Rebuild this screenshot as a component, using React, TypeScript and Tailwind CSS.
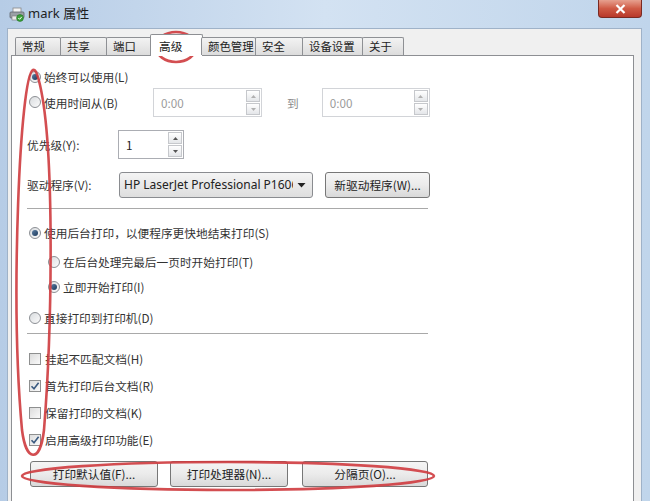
import React from 'react';

const TABS = [
    { label: '常规', w: 'w-[46px]' },
    { label: '共享', w: 'w-[47px]' },
    { label: '端口', w: 'w-[46px]' },
    { label: '高级', w: 'w-[53px]', active: true },
    { label: '颜色管理', w: 'w-[55px]' },
    { label: '安全', w: 'w-[48px]' },
    { label: '设备设置', w: 'w-[61px]' },
    { label: '关于', w: 'w-[42px]' },
];

function Radio({ checked }: { checked?: boolean }) {
    return (
        <span className="w-[12px] h-[12px] shrink-0 rounded-full border border-[#8c8f94] bg-linear-to-br from-[#d9dcdf] to-[#fbfbfb] flex items-center justify-center">
            {checked && <span className="w-[6px] h-[6px] rounded-full bg-linear-to-br from-[#5b7ea3] to-[#1d3a5c]" />}
        </span>
    );
}

function Check({ checked }: { checked?: boolean }) {
    return (
        <span className="w-[12px] h-[12px] shrink-0 border border-[#8e8f8f] bg-linear-to-br from-[#dcdcdc] to-[#fafafa] flex items-center justify-center">
            {checked && (
                <svg width="10" height="10" viewBox="0 0 10 10">
                    <path d="M1.5 5.2 L4 7.8 L8.6 1.8" fill="none" stroke="#3a5a80" strokeWidth="1.6" />
                </svg>
            )}
        </span>
    );
}

function Arrow({ up, color }: { up?: boolean; color: string }) {
    return (
        <svg width="5" height="3" viewBox="0 0 5 3">
            <path d={up ? 'M0 3 L2.5 0 L5 3 Z' : 'M0 0 L2.5 3 L5 0 Z'} fill={color} />
        </svg>
    );
}

function Spin({ value, disabled, className }: { value: string; disabled?: boolean; className: string }) {
    const arrow = disabled ? '#b0b0b0' : '#555';
    return (
        <div className={`h-[29px] flex border bg-white ${disabled ? 'border-[#d2d4d8]' : 'border-[#abadb3]'} ${className}`}>
            <div className={`flex-1 flex items-center pl-[7px] ${disabled ? 'text-[#9a9a9a]' : 'text-[#222]'}`}>{value}</div>
            <div className="w-[15px] flex flex-col gap-[1px] py-[1px] pr-[1px]">
                <div className="flex-1 border border-[#c6c8cc] bg-linear-to-b from-white to-[#e4e6e9] flex items-center justify-center">
                    <Arrow up color={arrow} />
                </div>
                <div className="flex-1 border border-[#c6c8cc] bg-linear-to-b from-white to-[#e4e6e9] flex items-center justify-center">
                    <Arrow color={arrow} />
                </div>
            </div>
        </div>
    );
}

function Btn({ children, className }: { children: React.ReactNode; className: string }) {
    return (
        <div className={`h-[26px] border border-[#777] rounded-[3px] bg-linear-to-b from-[#f5f5f5] via-[#ebebeb] to-[#d9d9d9] flex items-center justify-center whitespace-nowrap text-[#222] ${className}`}>
            {children}
        </div>
    );
}

export default function App() {
    return (
        <div className="w-[650px] h-[501px] overflow-hidden relative flex flex-col bg-linear-to-r from-[#b6cce6] via-[#d3e2f2] to-[#c0d5eb] text-[11.7px] text-[#333] font-['Microsoft_YaHei','Noto_Sans_CJK_SC',sans-serif]">
            {/* title bar */}
            <div className="h-[28px] shrink-0 flex items-start">
                <div className="flex items-center h-[28px] pl-[9px]">
                    <svg width="16" height="15" viewBox="0 0 16 15">
                        <rect x="4" y="1" width="8" height="5" fill="#f4f4f4" stroke="#888" strokeWidth="0.8" />
                        <rect x="1" y="5" width="14" height="6" rx="1" fill="#9aa0a6" stroke="#5d636a" strokeWidth="0.8" />
                        <rect x="3" y="9" width="10" height="4" fill="#e8e8e8" stroke="#777" strokeWidth="0.6" />
                        <circle cx="11" cy="11" r="3.4" fill="#3aa23a" stroke="#1f6e1f" strokeWidth="0.6" />
                        <path d="M9.3 11 L10.6 12.3 L12.8 9.8" fill="none" stroke="#fff" strokeWidth="1" />
                    </svg>
                    <span className="ml-[3px] text-[13px] text-[#1e1e1e] font-['Segoe_UI','Noto_Sans','Noto_Sans_CJK_SC',sans-serif]">mark 属性</span>
                </div>
                <div className="ml-auto mr-[8px] w-[44px] h-[18px] rounded-b-[4px] border border-t-0 border-[#7a2a22] bg-linear-to-b from-[#e6a08f] via-[#cf5a45] to-[#b8382a] flex items-center justify-center">
                    <svg width="11" height="10" viewBox="0 0 11 10">
                        <path d="M1.5 1 L9.5 9 M9.5 1 L1.5 9" stroke="#fff" strokeWidth="2.2" />
                    </svg>
                </div>
            </div>

            {/* window body */}
            <div className="flex-1 ml-[7px] mr-[8px] bg-[#f0f0f0] border border-b-0 border-[#9fb2c8] pt-[5px] pl-[3px] pr-[7px] flex flex-col">
                <div className="h-[21px] flex items-end pl-[4px] relative z-10">
                    {TABS.map((t, i) =>
                        t.active ? (
                            <div key={t.label} className={`${t.w} -ml-[2px] -mr-[1px] h-[22px] -mb-px bg-white border border-b-0 border-[#8d8f93] rounded-t-[2px] pl-[8px] pt-[2px] whitespace-nowrap text-[#222]`}>
                                {t.label}
                            </div>
                        ) : (
                            <div key={t.label} className={`${t.w} ${i === 0 ? '' : '-ml-px'} h-[18px] border border-b-0 border-[#8e9094] rounded-t-[2px] bg-linear-to-b from-[#f3f3f3] to-[#dcdcdc] pl-[6px] leading-[17px] whitespace-nowrap text-[11.4px] text-[#222]`}>
                                {t.label}
                            </div>
                        ),
                    )}
                </div>

                <div className="flex-1 bg-white border border-b-0 border-[#8d8f93] pl-[15px] flex flex-col">
                    <div className="mt-[13px] h-[16px] flex items-center gap-[3px] ml-[2px]">
                        <Radio checked />
                        <span>始终可以使用(L)</span>
                    </div>

                    <div className="mt-[3px] flex items-center">
                        <div className="w-[126px] flex items-center gap-[3px] pl-[2px]">
                            <Radio />
                            <span>使用时间从(B)</span>
                        </div>
                        <Spin value="0:00" disabled className="w-[109px]" />
                        <span className="ml-[25px] text-[#8a8a8a]">到</span>
                        <Spin value="0:00" disabled className="ml-[23px] w-[108px]" />
                    </div>

                    <div className="mt-[13px] flex items-center">
                        <span className="w-[91px]">优先级(Y):</span>
                        <Spin value="1" className="w-[66px]" />
                    </div>

                    <div className="mt-[13px] flex items-center">
                        <span className="w-[92px]">驱动程序(V):</span>
                        <div className="w-[194px] h-[26px] border border-[#8a8c90] rounded-[3px] bg-linear-to-b from-[#f4f4f4] to-[#dedede] flex items-center pl-[4px] pr-[4px]">
                            <span className="flex-1 overflow-hidden whitespace-nowrap text-[#222] font-['Segoe_UI','Noto_Sans',sans-serif] text-[12px]">
                                HP LaserJet Professional P1606dn
                            </span>
                            <svg width="9" height="5" viewBox="0 0 9 5" className="ml-[4px] mr-[2px]">
                                <path d="M0.5 0 L4.5 4.5 L8.5 0 Z" fill="#222" />
                            </svg>
                        </div>
                        <Btn className="ml-[12px] w-[105px]">新驱动程序(W)...</Btn>
                    </div>

                    <div className="mt-[10px] w-[401px] h-px bg-[#a9a9a9]" />

                    <div className="mt-[16px] h-[16px] flex items-center gap-[3px] ml-[2px]">
                        <Radio checked />
                        <span>使用后台打印，以便程序更快地结束打印(S)</span>
                    </div>
                    <div className="mt-[13px] h-[16px] flex items-center gap-[3px] ml-[21px]">
                        <Radio />
                        <span>在后台处理完最后一页时开始打印(T)</span>
                    </div>
                    <div className="mt-[9px] h-[16px] flex items-center gap-[3px] ml-[21px]">
                        <Radio checked />
                        <span>立即开始打印(I)</span>
                    </div>
                    <div className="mt-[15px] h-[16px] flex items-center gap-[3px] ml-[2px]">
                        <Radio />
                        <span>直接打印到打印机(D)</span>
                    </div>

                    <div className="mt-[7px] w-[401px] h-px bg-[#a9a9a9]" />

                    {[
                        { label: '挂起不匹配文档(H)', checked: false, mt: 'mt-[17px]' },
                        { label: '首先打印后台文档(R)', checked: true, mt: 'mt-[11px]' },
                        { label: '保留打印的文档(K)', checked: false, mt: 'mt-[11px]' },
                        { label: '启用高级打印功能(E)', checked: true, mt: 'mt-[11px]' },
                    ].map((c) => (
                        <div key={c.label} className={`${c.mt} h-[16px] flex items-center gap-[4px] ml-[2px]`}>
                            <Check checked={c.checked} />
                            <span>{c.label}</span>
                        </div>
                    ))}

                    <div className="mt-[13px] ml-[3px] flex items-center">
                        <Btn className="w-[128px]">打印默认值(F)...</Btn>
                        <Btn className="ml-[12px] w-[118px]">打印处理器(N)...</Btn>
                        <Btn className="ml-[14px] w-[126px]">分隔页(O)...</Btn>
                    </div>
                </div>
            </div>

            {/* red hand-drawn annotations */}
            <svg className="absolute inset-0 pointer-events-none" width="650" height="501" viewBox="0 0 650 501">
                <g fill="none" stroke="#cf3b3f" strokeWidth="2.6" strokeLinecap="round" opacity="0.9">
                    <ellipse cx="176" cy="47" rx="20" ry="15" />
                    <path d="M33 70 C20 75 10 300 22 430 C26 462 40 464 44 430 C52 330 55 150 40 85 C37 72 35 69 33 70" />
                    <ellipse cx="228" cy="476" rx="206" ry="14" />
                </g>
            </svg>
        </div>
    );
}
